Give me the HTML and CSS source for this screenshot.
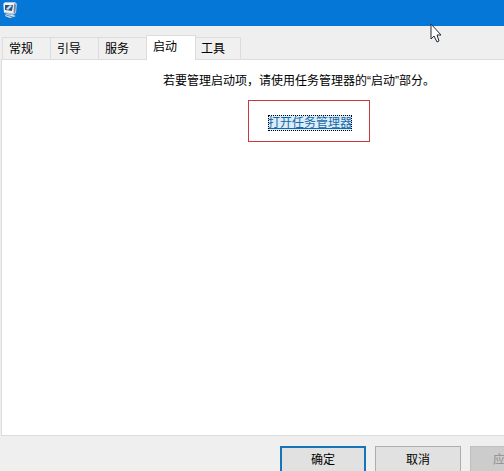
FILE: index.html
```
<!DOCTYPE html>
<html lang="zh-CN">
<head>
    <meta charset="UTF-8">
    <meta name="viewport" content="width=device-width, initial-scale=1.0">
    <title>系统配置</title>
    <link rel="stylesheet" href="styles.css">
</head>
<body>
    <div class="titlebar">
        <svg class="app-icon" width="18" height="18" viewBox="0 0 18 18" aria-hidden="true">
            <path d="M2 3L4 1L14 1L16 3L15 12L12 14L3 12Z" fill="#b4c6d8"/>
            <path d="M3 2L13 2L12 12L3 11Z" fill="#eef5fa"/>
            <path d="M4 4L12 4L11 10L4 9Z" fill="#33557c"/>
            <path d="M5 8L9 4L11 5L7 9Z" fill="#c4def2"/>
            <path d="M13 3L15 4L14 12L13 12Z" fill="#718ba8"/>
            <path d="M5 13L12 14L15 15L9 17L4 15Z" fill="#dce7ef"/>
            <path d="M5 14L12 16" stroke="#6f879e" stroke-width="1"/>
        </svg>
    </div>

    <!-- Tabs -->
    <div class="tabs" role="tablist">
        <button class="tab" role="tab">常规</button>
        <button class="tab" role="tab">引导</button>
        <button class="tab" role="tab">服务</button>
        <button class="tab active" role="tab" aria-selected="true">启动</button>
        <button class="tab" role="tab">工具</button>
    </div>

    <!-- Startup tab -->
    <main class="panel">
        <div class="startup">
            <p class="message">若要管理启动项，请使用任务管理器的“启动”部分。</p>
            <div class="link-box">
                <a class="link" href="#">打开任务管理器</a>
            </div>
        </div>
    </main>

    <!-- Dialog buttons -->
    <div class="buttons">
        <button class="btn default">确定</button>
        <button class="btn">取消</button>
        <button class="btn" disabled>应用(A)</button>
    </div>

    <svg class="cursor" width="13" height="20" viewBox="0 0 13 20" aria-hidden="true">
        <path d="M1 1V16L4 13L7 19L9 18L7 12H11Z" fill="#fff" stroke="#222b38" stroke-width="1"/>
    </svg>
</body>
</html>
```

FILE: styles.css
```
* {
    box-sizing: border-box;
}

body {
    display: flex;
    flex-direction: column;
    height: 100vh;
    margin: 0;
    overflow: hidden;
    background-color: #efefef;
    color: #000;
    font-family: "Liberation Sans", "Noto Sans CJK SC", sans-serif;
    font-size: 12px;
    line-height: 16px;
}

button {
    font: inherit;
    color: inherit;
}

.titlebar {
    flex: none;
    height: 26px;
    padding: 1px;
    background-color: #0577d7;
}

.app-icon {
    display: block;
}

.tabs {
    display: flex;
    flex: none;
    align-items: flex-end;
    height: 33px;
    padding-left: 2px;
}

.tab {
    width: 48px;
    height: 22px;
    padding: 0 0 0 6px;
    border: 1px solid #dcdcdc;
    border-right: none;
    border-bottom: none;
    background-color: #f0f0f0;
    text-align: left;
}

.tab:last-child {
    width: 45px;
    padding-left: 5px;
    border-left: none;
    border-right: 1px solid #dcdcdc;
}

.tab.active {
    position: relative;
    width: 50px;
    height: 25px;
    margin-bottom: -1px;
    padding-bottom: 2px;
    border-right: 1px solid #dcdcdc;
    background-color: #fff;
}

.panel {
    flex: 1;
    margin-left: 1px;
    padding-top: 13px;
    border: 1px solid #dcdcdc;
    border-right: none;
    background-color: #fff;
}

.startup {
    width: max-content;
    margin: 0 auto;
    padding-left: 92px;
}

.message {
    margin: 0;
}

.link-box {
    width: 122px;
    height: 42px;
    margin: 11px 0 0 85px;
    padding: 14px 0 0 2px;
    border: 1px solid #c8383c;
    text-align: center;
}

.link {
    display: inline-block;
    outline: 1px dotted #000;
    outline-offset: -1px;
    background-color: #d9edfa;
    color: #1b68a6;
}

/* The last button runs past the window edge */
.buttons {
    display: flex;
    flex: none;
    justify-content: flex-end;
    gap: 9px;
    height: 35px;
    margin-right: -52px;
    padding-top: 10px;
}

.btn {
    flex: none;
    width: 86px;
    height: 28px;
    padding: 0;
    border: 1px solid #adadad;
    background-color: #e1e1e1;
}

.btn.default {
    border: 2px solid #1874b9;
}

.btn:disabled {
    border-color: #bfbfbf;
    background-color: #cccccc;
    color: #8f8f8f;
}

.cursor {
    position: absolute;
    top: 23px;
    left: 430px;
}
```
